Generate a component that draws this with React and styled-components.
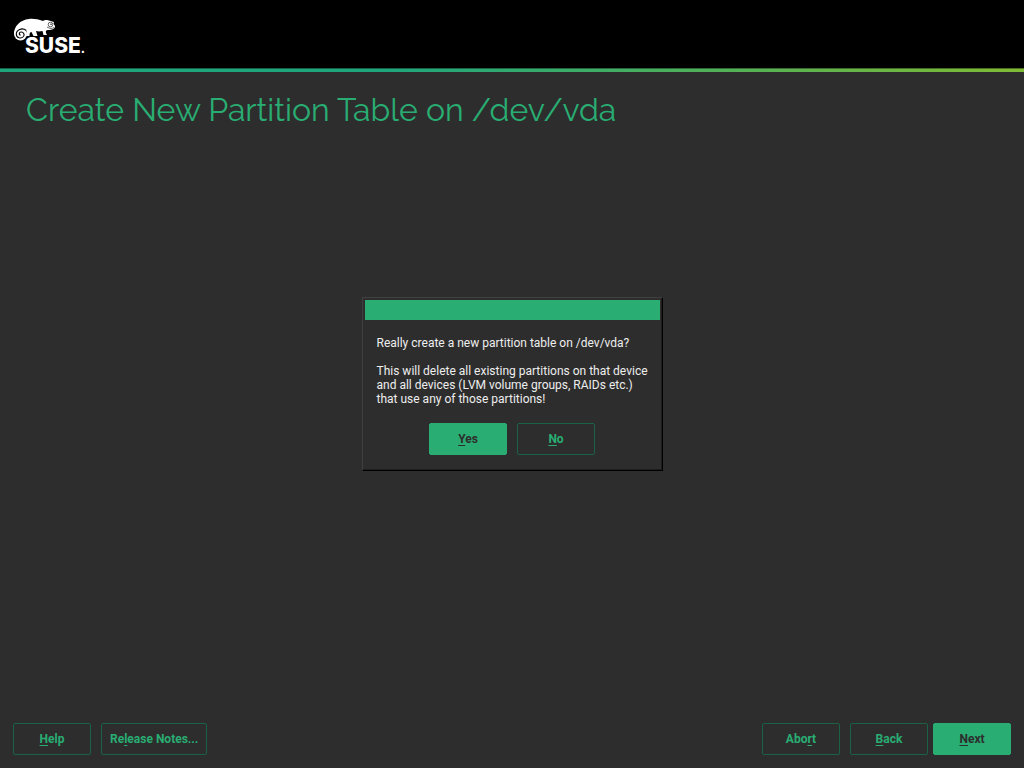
import React from 'react';
import styled, { createGlobalStyle, css } from 'styled-components';

const GlobalStyle = createGlobalStyle`
  *, *::before, *::after { box-sizing: border-box; }
  body {
    margin: 0;
    background: #2d2d2d;
    color: #eeeeee;
    font: 12px/14px Roboto, "Liberation Sans", sans-serif;
  }
`;

const Page = styled.div`
  min-height: 100vh;
  display: flex;
  flex-direction: column;
`;

const Header = styled.header`
  height: 68px;
  padding: 15px 12px;
  background: #000000;
`;

const Rule = styled.div`
  height: 4px;
  background: linear-gradient(to right, #20a67d, #20a67d 38%, #80bb35);
  box-shadow: inset 0 1px 0 rgba(0, 0, 0, 0.4);
`;

const Main = styled.main`
  flex: 1;
  padding: 18px 26px;
`;

const Title = styled.h1`
  margin: 0;
  color: #29ad73;
  font: 400 32px/40px Raleway, Lato, sans-serif;
`;

const Footer = styled.footer`
  display: flex;
  justify-content: space-between;
  padding: 13px;
`;

const Group = styled.div`
  display: flex;
  gap: ${(p) => p.$gap || 10}px;
`;

const PushButton = styled.button`
  min-width: 78px;
  height: 32px;
  padding: 0 8px;
  border: 1px solid #1b6146;
  border-radius: 2px;
  background: transparent;
  color: #29ad73;
  font: 700 12px/14px Roboto, "Liberation Sans", sans-serif;
  ${(p) => p.$primary && css`
    border-color: #29ad73;
    background: #29ad73;
    color: #2d2d2d;
  `}
`;

const Mnemonic = styled.span`
  text-decoration: underline;
  text-decoration-thickness: 1px;
  text-underline-offset: 2px;
  text-decoration-skip-ink: none;
`;

const Overlay = styled.div`
  position: fixed;
  inset: 0;
  display: flex;
  align-items: center;
  justify-content: center;
`;

const Dialog = styled.section`
  width: 301px;
  padding: 2px;
  border: 1px solid;
  border-color: #404040 #000000 #000000 #404040;
  background: #2d2d2d;
  box-shadow: inset -1px -1px 0 #1e1e1e;
`;

const TitleBar = styled.div`
  height: 20px;
  background: #29ad73;
`;

const DialogBody = styled.div`
  display: flex;
  flex-direction: column;
  align-items: center;
  gap: 17px;
  padding: 16px 12px 13px;
`;

const Message = styled.div`
  align-self: stretch;
  white-space: nowrap;
`;

const Paragraph = styled.p`
  margin: 0 0 14px;
  &:last-child { margin-bottom: 0; }
`;

const LogoDrawing = styled.svg`
  display: block;
  overflow: visible;
`;

function Action({ before = '', hot, after, primary }) {
  return (
    <PushButton type="button" $primary={primary}>
      {before}<Mnemonic>{hot}</Mnemonic>{after}
    </PushButton>
  );
}

function Logo() {
  return (
    <LogoDrawing width="90" height="48" viewBox="12 15 90 48" role="img" aria-label="SUSE">
      <path
        d="M14 34C14 26 20 20 29 19C34 18.500 38 19.500 43 21C44 20 46 19.600 49 20.500L54 22L53.500 23.500L55 26C55 29 52 30 48 30C46 30 45.500 31 46 33L47 35H43.500L42.500 31C40 31.500 38 31.500 36 31L37.500 36H33.500L31.500 32C30 32 29.500 33 29.500 36H26L27 31Z"
        fill="#fff"
      />
      <circle cx="20.500" cy="34" r="6.500" fill="#fff" />
      <path
        d="M26.300 30.500C22 27 16.300 30 16.300 34C16.300 38 21 39.300 23.500 36.500C25 34.500 23.500 31.800 21 32C19 32.200 18.600 35 20.600 35.200"
        fill="none"
        stroke="#000"
        strokeWidth="1.100"
      />
      <circle cx="50.500" cy="24.500" r="2.300" fill="#fff" stroke="#000" strokeWidth="0.600" />
      <circle cx="51" cy="24.200" r="0.700" fill="#000" />
      <path d="M54 27.500C52 29 49.500 28.500 47 27" fill="none" stroke="#000" strokeWidth="0.600" />
      <text x="25" y="53" fill="#fff" stroke="#000" strokeWidth="2" paintOrder="stroke" fontFamily="Inter, sans-serif" fontSize="21" fontWeight="800">
        SUSE<tspan fontSize="12">.</tspan>
      </text>
    </LogoDrawing>
  );
}

export default function App() {
  return (
    <>
      <GlobalStyle />
      <Page>
        <Header><Logo /></Header>
        <Rule />
        <Main><Title>Create New Partition Table on /dev/vda</Title></Main>
        <Footer>
          <Group>
            <Action hot="H" after="elp" />
            <Action before="Re" hot="l" after="ease Notes..." />
          </Group>
          <Group>
            <Action before="Abo" hot="r" after="t" />
            <Group $gap={5}>
              <Action hot="B" after="ack" />
              <Action hot="N" after="ext" primary />
            </Group>
          </Group>
        </Footer>
      </Page>
      <Overlay>
        <Dialog role="alertdialog" aria-modal="true" aria-describedby="message">
          <TitleBar />
          <DialogBody>
            <Message id="message">
              <Paragraph>Really create a new partition table on /dev/vda?</Paragraph>
              <Paragraph>
                This will delete all existing partitions on that device<br />
                and all devices (LVM volume groups, RAIDs etc.)<br />
                that use any of those partitions!
              </Paragraph>
            </Message>
            <Group>
              <Action hot="Y" after="es" primary />
              <Action hot="N" after="o" />
            </Group>
          </DialogBody>
        </Dialog>
      </Overlay>
    </>
  );
}
